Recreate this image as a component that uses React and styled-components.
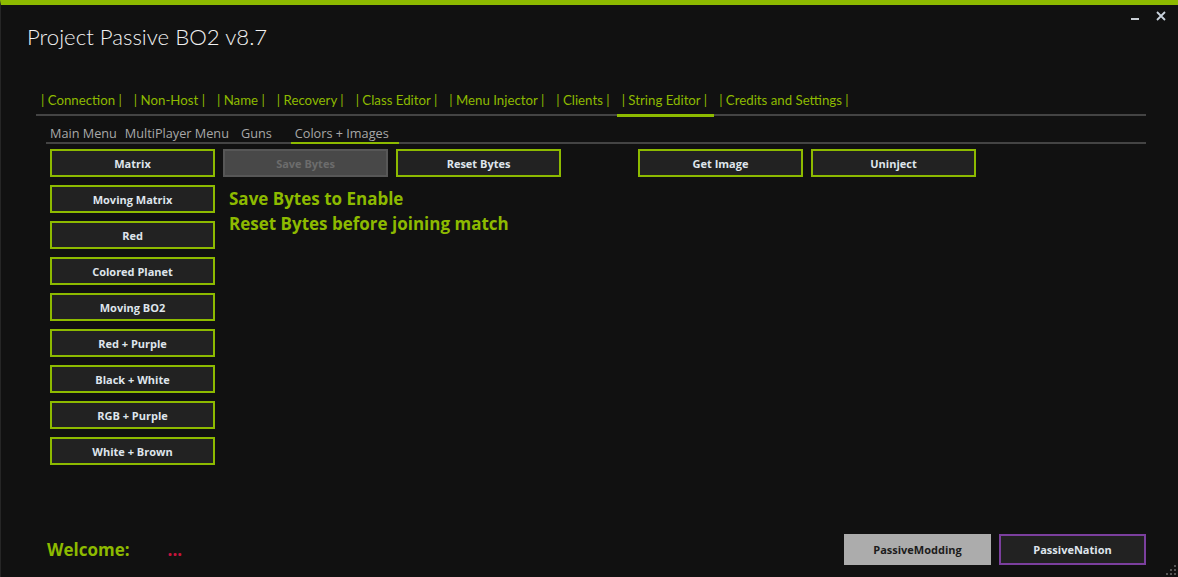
import React from 'react'
import styled, { createGlobalStyle } from 'styled-components'

const green = '#8dba00'

const Global = createGlobalStyle`
  html, body {
    margin: 0;
    padding: 0;
    background: #111111;
  }
  body {
    font-family: "Open Sans", "Liberation Sans", sans-serif;
  }
`

const Window = styled.div`
  position: relative;
  display: flex;
  flex-direction: column;
  box-sizing: border-box;
  width: 1178px;
  height: 577px;
  background: #111111;
  border-top: 5px solid ${green};
  border-left: 1px solid #262626;
  overflow: hidden;
`

const TitleBar = styled.div`
  display: flex;
  justify-content: space-between;
  align-items: flex-start;
  height: 82px;
  padding: 0 12px 0 26px;
`

const Title = styled.div`
  margin-top: 17px;
  font-family: Lato, "Open Sans", sans-serif;
  font-size: 22.2px;
  font-weight: 300;
  line-height: 30px;
  color: #f2f2f2;
`

const Controls = styled.div`
  display: flex;
  align-items: flex-start;
  gap: 17px;
  margin-top: 6px;
`

const Tabs = styled.div`
  display: flex;
  margin: 0 32px 0 35px;
  border-bottom: 2px solid #444;
`

const Tab = styled.div`
  position: relative;
  padding: 0 7px 0 5px;
  height: 27px;
  line-height: 26px;
  font-family: Lato, "Open Sans", sans-serif;
  font-size: 13.25px;
  color: ${green};
  white-space: nowrap;
  &::after {
    content: '';
    display: ${p => p.$active ? 'block' : 'none'};
    position: absolute;
    left: 0;
    right: 0;
    bottom: -3px;
    height: 3px;
    background: ${green};
  }
`

const SubTabs = styled.div`
  display: flex;
  align-items: flex-end;
  height: 26px;
  margin: 0 32px 0 45px;
  border-bottom: 2px solid #444;
`

const SubTab = styled.div`
  position: relative;
  margin-left: ${p => p.$offset || 0}px;
  padding: 0 ${p => p.$active ? 10 : 4}px 0 4px;
  line-height: 18px;
  font-size: 12.7px;
  color: #a8a8a8;
  white-space: nowrap;
  &::after {
    content: '';
    display: ${p => p.$active ? 'block' : 'none'};
    position: absolute;
    left: 0;
    right: 0;
    bottom: -2px;
    height: 2px;
    background: ${green};
  }
`

const Content = styled.div`
  display: grid;
  grid-template-columns: 165px 1fr;
  column-gap: 8px;
  padding: 5px 0 0 49px;
`

const Column = styled.div`
  display: flex;
  flex-direction: column;
  gap: 8px;
`

const Row = styled.div`
  display: flex;
  gap: 8px;
`

const Button = styled.div`
  box-sizing: border-box;
  display: flex;
  align-items: center;
  justify-content: center;
  width: ${p => p.$wide ? 147 : 165}px;
  height: ${p => p.$wide ? 31 : 28}px;
  margin-left: ${p => p.$offset || 0}px;
  font-size: 11px;
  font-weight: 700;
  color: #dfe5ec;
  background: #222222;
  border: 2px solid ${green};
`

const DisabledButton = styled(Button)`
  background: #484848;
  border-color: #575757;
  color: #6c6c6c;
`

const LightButton = styled(Button)`
  background: #acacac;
  border-color: #acacac;
  color: #1c1c1c;
`

const PurpleButton = styled(Button)`
  border-color: #7b3f9e;
`

const Notes = styled.div`
  margin-top: 9px;
  padding-left: 6px;
`

const Note = styled.div`
  font-size: 17px;
  font-weight: 700;
  line-height: 25px;
  color: ${green};
`

const Footer = styled.div`
  display: flex;
  align-items: center;
  margin-top: auto;
  padding: 0 32px 12px 46px;
`

const Welcome = styled.div`
  font-size: 17px;
  font-weight: 700;
  color: ${green};
`

const Dots = styled.div`
  margin-left: 38px;
  font-size: 17px;
  font-weight: 700;
  color: #c8143c;
`

const FooterButtons = styled.div`
  display: flex;
  gap: 8px;
  margin-left: auto;
`

const Grip = styled.svg`
  position: absolute;
  right: 2px;
  bottom: 2px;
`

const tabs = ['Connection', 'Non-Host', 'Name', 'Recovery', 'Class Editor', 'Menu Injector', 'Clients', 'String Editor', 'Credits and Settings']
const presets = ['Matrix', 'Moving Matrix', 'Red', 'Colored Planet', 'Moving BO2', 'Red + Purple', 'Black + White', 'RGB + Purple', 'White + Brown']

export default function App() {
  return (
    <Window>
      <Global />
      <TitleBar>
        <Title>Project Passive BO2 v8.7</Title>
        <Controls>
          <svg width="8" height="9" viewBox="0 0 8 9">
            <rect x="0" y="7" width="8" height="2" fill="#c9ced4" />
          </svg>
          <svg width="10" height="10" viewBox="0 0 10 10">
            <path d="M1 1 L9 9 M9 1 L1 9" stroke="#c9d2dc" strokeWidth="1.8" />
          </svg>
        </Controls>
      </TitleBar>

      <Tabs>
        {tabs.map(t => (
          <Tab key={t} $active={t === 'String Editor'}>| {t} |</Tab>
        ))}
      </Tabs>

      <SubTabs>
        <SubTab>Main Menu</SubTab>
        <SubTab>MultiPlayer Menu</SubTab>
        <SubTab $offset={4}>Guns</SubTab>
        <SubTab $offset={15} $active>Colors + Images</SubTab>
      </SubTabs>

      <Content>
        <Column>
          {presets.map(p => <Button key={p}>{p}</Button>)}
        </Column>
        <div>
          <Row>
            <DisabledButton>Save Bytes</DisabledButton>
            <Button>Reset Bytes</Button>
            <Button $offset={69}>Get Image</Button>
            <Button>Uninject</Button>
          </Row>
          <Notes>
            <Note>Save Bytes to Enable</Note>
            <Note>Reset Bytes before joining match</Note>
          </Notes>
        </div>
      </Content>

      <Footer>
        <Welcome>Welcome:</Welcome>
        <Dots>...</Dots>
        <FooterButtons>
          <LightButton $wide>PassiveModding</LightButton>
          <PurpleButton $wide>PassiveNation</PurpleButton>
        </FooterButtons>
      </Footer>

      <Grip width="10" height="10" viewBox="0 0 10 10">
        <g fill="#555">
          <rect x="8" y="0" width="2" height="2" />
          <rect x="4" y="4" width="2" height="2" />
          <rect x="8" y="4" width="2" height="2" />
          <rect x="0" y="8" width="2" height="2" />
          <rect x="4" y="8" width="2" height="2" />
          <rect x="8" y="8" width="2" height="2" />
        </g>
      </Grip>
    </Window>
  )
}
